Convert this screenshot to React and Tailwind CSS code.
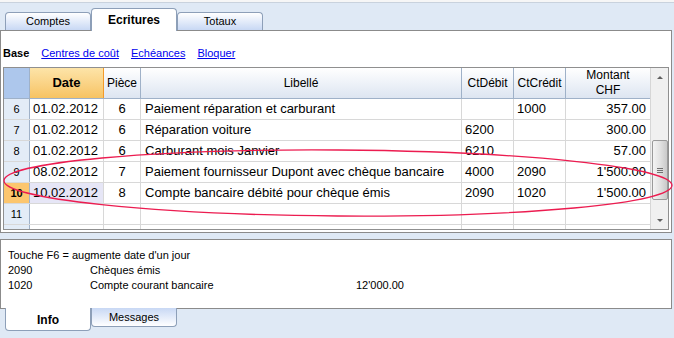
const rows = [
  { n: 6, date: '01.02.2012', piece: '6', lib: 'Paiement réparation et carburant', deb: '', cre: '1000', mt: '357.00' },
  { n: 7, date: '01.02.2012', piece: '6', lib: 'Réparation voiture', deb: '6200', cre: '', mt: '300.00' },
  { n: 8, date: '01.02.2012', piece: '6', lib: 'Carburant mois Janvier', deb: '6210', cre: '', mt: '57.00' },
  { n: 9, date: '08.02.2012', piece: '7', lib: 'Paiement fournisseur Dupont avec chèque bancaire', deb: '4000', cre: '2090', mt: "1'500.00" },
  { n: 10, date: '10.02.2012', piece: '8', lib: 'Compte bancaire débité pour chèque émis', deb: '2090', cre: '1020', mt: "1'500.00", active: true },
  { n: 11, date: '', piece: '', lib: '', deb: '', cre: '', mt: '' },
  { n: '', date: '', piece: '', lib: '', deb: '', cre: '', mt: '' },
];

const cols = 'grid grid-cols-[26px_74px_37px_321px_52px_52px_84px]';

function TopTab({ label, active }) {
  if (active) {
    return (
      <div className="w-[86px] h-[23px] -mb-px z-10 bg-white border border-b-0 border-[#8d9fb8] rounded-t-[4px] flex items-center justify-center font-bold text-[12px] text-black">
        {label}
      </div>
    );
  }
  return (
    <div className="w-[86px] h-[18px] bg-gradient-to-b from-[#ffffff] to-[#c8d8f4] border border-b-0 border-[#8d9fb8] rounded-t-[4px] flex items-center justify-center text-[11px] text-black">
      {label}
    </div>
  );
}

function Scrollbar() {
  return (
    <div className="w-[20px] bg-[#f0f0f0] border-l border-[#d6d6d6] flex flex-col items-center">
      <div className="h-[17px] w-full flex items-center justify-center pt-[2px]">
        <div className="w-0 h-0 border-l-[3px] border-r-[3px] border-b-[3px] border-l-transparent border-r-transparent border-b-[#606060]" />
      </div>
      <div className="flex-1 w-full" />
      <div className="w-[16px] h-[60px] rounded-[2px] border border-[#9a9a9a] bg-gradient-to-r from-[#f4f4f4] via-[#e2e2e2] to-[#c9c9c9] flex flex-col items-center justify-center gap-[1px]">
        <div className="w-[6px] h-px bg-[#707070]" />
        <div className="w-[6px] h-px bg-[#707070]" />
        <div className="w-[6px] h-px bg-[#707070]" />
      </div>
      <div className="h-[12px] w-full" />
      <div className="h-[17px] w-full flex items-center justify-center">
        <div className="w-0 h-0 border-l-[3px] border-r-[3px] border-t-[3px] border-l-transparent border-r-transparent border-t-[#606060]" />
      </div>
    </div>
  );
}

function Grid() {
  const cell = 'border-r border-[#d8d8d8] h-[20px] flex items-center text-[13px] text-black';
  return (
    <div className="mx-[2px] h-[163px] border border-[#8f8f8f] flex overflow-hidden">
      <div className="flex-1 flex flex-col">
        <div className={`${cols} h-[32px] border-b border-[#9fb1c8] text-[12px] text-black`}>
          <div className="bg-[#adc7ec] border-r border-[#9fb1c8]" />
          <div className="bg-gradient-to-b from-[#fde4a8] to-[#f7c362] border-r border-[#f39a2a] flex items-center justify-center font-bold text-[13px]">Date</div>
          <div className="bg-gradient-to-b from-[#ffffff] to-[#dde5f1] border-r border-[#9fb1c8] flex items-center justify-center">Pièce</div>
          <div className="bg-gradient-to-b from-[#ffffff] to-[#dde5f1] border-r border-[#9fb1c8] flex items-center justify-center">Libellé</div>
          <div className="bg-gradient-to-b from-[#ffffff] to-[#dde5f1] border-r border-[#9fb1c8] flex items-center justify-center">CtDébit</div>
          <div className="bg-gradient-to-b from-[#ffffff] to-[#dde5f1] border-r border-[#9fb1c8] flex items-center justify-center">CtCrédit</div>
          <div className="bg-gradient-to-b from-[#ffffff] to-[#dde5f1] flex flex-col items-center justify-center leading-[15px]">
            <span>Montant</span>
            <span>CHF</span>
          </div>
        </div>
        {rows.map((r, i) => (
          <div key={i} className={`${cols} border-b border-[#d8d8d8]`}>
            <div className={`h-[20px] border-r border-[#9fb1c8] flex items-center justify-center text-[11px] text-black ${r.active ? 'bg-[#fcc66e] font-bold' : 'bg-[#e3ecf7]'}`}>
              {r.n}
            </div>
            <div className={`${cell} pl-[3px] ${r.active ? 'bg-[#e6e6f6]' : ''}`}>{r.date}</div>
            <div className={`${cell} justify-center`}>{r.piece}</div>
            <div className={`${cell} pl-[4px]`}>{r.lib}</div>
            <div className={`${cell} pl-[3px]`}>{r.deb}</div>
            <div className={`${cell} pl-[3px]`}>{r.cre}</div>
            <div className="h-[20px] flex items-center justify-end pr-[4px] text-[13px] text-black">{r.mt}</div>
          </div>
        ))}
      </div>
      <Scrollbar />
    </div>
  );
}

export default function App() {
  return (
    <div className="relative w-[674px] h-[338px] overflow-hidden bg-[#dfe9f5] font-['Liberation_Sans',Arial,sans-serif]">
      <div className="h-[3px] bg-[#f6f6f6] border-b border-[#c9d2dd]" />
      <div className="h-[27px] flex items-end pl-[5px]">
        <TopTab label="Comptes" />
        <TopTab label="Ecritures" active />
        <TopTab label="Totaux" />
      </div>
      <div className="h-[203px] mr-[2px] bg-white border border-[#8b8b8b]">
        <div className="h-[36px] flex items-center gap-[12px] pl-[2px] pt-[8px] text-[11px]">
          <span className="font-bold text-black">Base</span>
          <span className="text-[#0000ee] underline">Centres de coût</span>
          <span className="text-[#0000ee] underline">Echéances</span>
          <span className="text-[#0000ee] underline">Bloquer</span>
        </div>
        <Grid />
      </div>
      <div className="h-[6px]" />
      <div className="h-[70px] mr-[2px] bg-white border border-[#8b8b8b] pt-[8px] pl-[7px] text-[11px] leading-[15px] text-black">
        <div>Touche F6 = augmente date d'un jour</div>
        <div className="flex">
          <span className="w-[82px]">2090</span>
          <span>Chèques émis</span>
        </div>
        <div className="flex">
          <span className="w-[82px]">1020</span>
          <span className="w-[266px]">Compte courant bancaire</span>
          <span>12'000.00</span>
        </div>
      </div>
      <div className="flex items-start pl-[5px] -mt-px">
        <div className="w-[86px] h-[23px] bg-white border border-t-0 border-[#8d9fb8] rounded-b-[4px] flex items-center justify-center pt-[2px] font-bold text-[12px] text-black z-10">
          Info
        </div>
        <div className="w-[86px] h-[19px] bg-gradient-to-t from-[#ffffff] to-[#c8d8f4] border border-t-0 border-[#8d9fb8] rounded-b-[4px] flex items-center justify-center text-[11px] text-black">
          Messages
        </div>
      </div>
      <svg className="absolute inset-0 pointer-events-none" width="674" height="338">
        <ellipse cx="338" cy="183" rx="334" ry="33" fill="none" stroke="#ec1c50" strokeWidth="1.3" transform="rotate(0.4 338 183)" />
      </svg>
    </div>
  );
}
